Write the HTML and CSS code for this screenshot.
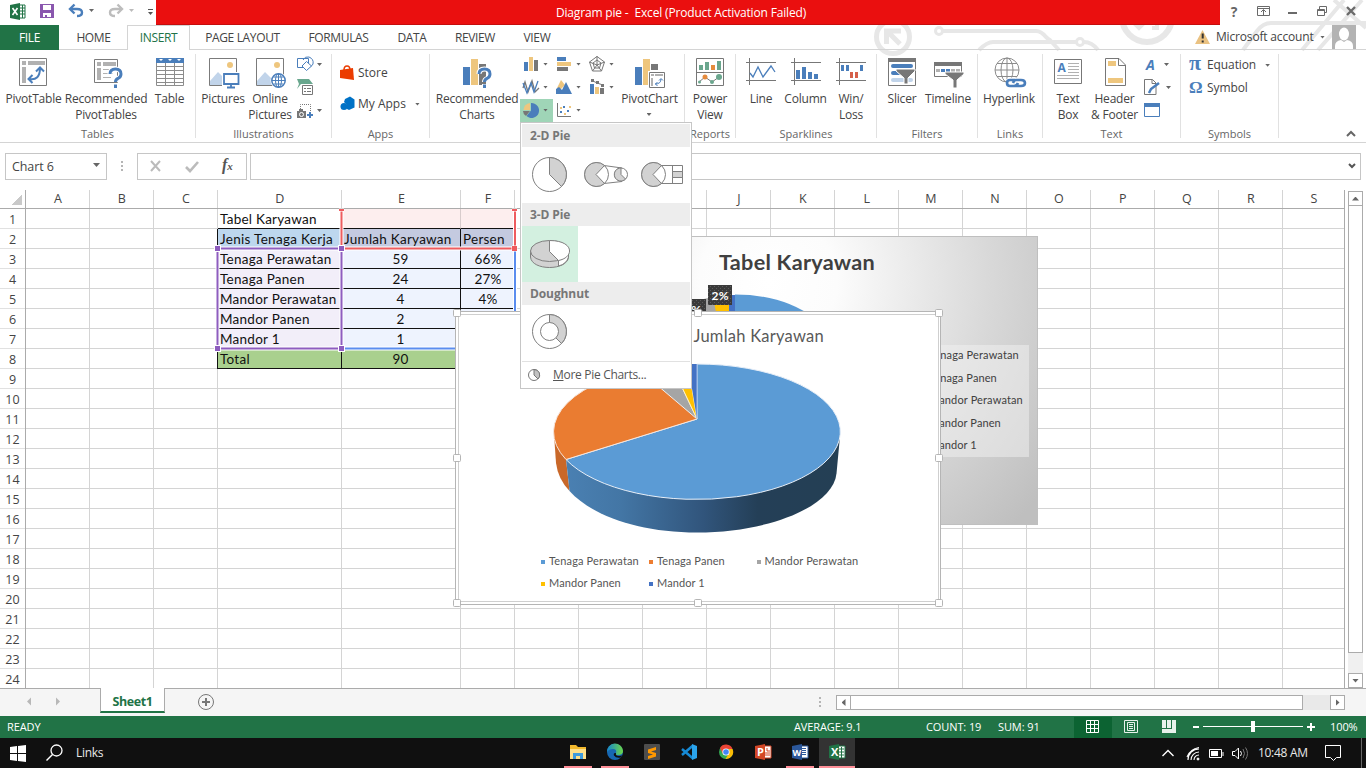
FILE: index.html
```html
<!DOCTYPE html>
<html lang="en">
<head>
<meta charset="utf-8">
<title>Diagram pie - Excel</title>
<link rel="stylesheet" href="styles.css">
</head>
<body>
<div class="app">
  <svg class="circuit" width="500" height="50" viewBox="866 0 500 50" fill="none" stroke="#e7e7e7" stroke-width="4">
    <circle cx="893" cy="37" r="16.5" stroke-width="5"/>
    <path d="M900 44 887 31M886.500 44V31H901" stroke-width="5"/>
    <circle cx="939" cy="31" r="3.5" stroke-width="3"/><path d="M943 31h93q5 0 10 6l7 6M979 50q8-8 14-8h83M1084 42q8 0 14 8M1049 39l10 11"/>
    <circle cx="1080" cy="42" r="3.5" stroke-width="3"/>
    <circle cx="1147" cy="17" r="25" stroke-width="6"/><path d="M1134 23l5 5 8-8M1157 24v4h-5"/>
    <path d="M1243 50l14-19q6-8 14-8h95M1302 50l42-50M1318 50l44-50M1334 0l32 28"/>
  </svg>

  <header class="titlebar">
    <div class="quick">
      <svg width="156" height="25" viewBox="0 0 156 25" fill="none">
        <path d="M19 5h6v13h-6z" fill="#fff" stroke="#217346"/><path d="M20 8h5M20 11h5M20 14h5M22.500 5v13" stroke="#217346"/><path d="M10 5l10-2v17l-10-2z" fill="#217346"/><path d="M12.500 8l5 7M17.500 8l-5 7" stroke="#fff" stroke-width="1.600"/>
        <path d="M40 4h14v14H40z" fill="#8a57ae"/><path d="M43 5h8v5h-8zM43 13h8v4h-8z" fill="#fff"/><path d="M45 15h2v2h-2z" fill="#8a57ae"/>
        <path d="M71 9h6q5 0 5 3.500t-5 3.500" stroke="#4a7ebb" stroke-width="2.400"/><path d="M74.500 4.500L70 9l4.500 4.500" stroke="#4a7ebb" stroke-width="2.400"/>
        <path d="M121 9h-6q-5 0-5 3.500t5 3.500" stroke="#bdbdbd" stroke-width="2.400"/><path d="M117.500 4.500L122 9l-4.500 4.500" stroke="#bdbdbd" stroke-width="2.400"/>
        <path d="M89 9h5l-2.500 3z" fill="#666"/><path d="M129 9h5l-2.500 3z" fill="#bbb"/><path d="M148 9.500h5" stroke="#555"/><path d="M148 12h5l-2.500 3z" fill="#555"/>
      </svg>
    </div>
    <div class="caption"><span>Diagram pie -&nbsp; Excel (Product Activation Failed)</span></div>
    <div class="window-controls">
      <b class="help">?</b>
      <svg width="118" height="25" viewBox="1248 0 118 25" fill="none" stroke="#6a6a6a">
        <path d="M1257.500 6.500h12v9h-12zM1257.500 8.500h12M1263.500 15v-5M1261 12l2.500-2.500 2.500 2.500"/>
        <path d="M1288 13h9" stroke-width="2"/><path d="M1319.500 6.500h7v6h-7z"/><path d="M1317.500 9.500h7v6h-7z" fill="#fff"/><path d="M1317.500 10.500h7"/>
        <path d="M1347 7l8 8M1355 7l-8 8" stroke-width="2.400"/>
      </svg>
    </div>
  </header>

  <nav class="tabs">
    <span class="tab tab-file">FILE</span><span class="tab tab-home">HOME</span><span class="tab tab-insert">INSERT</span><span class="tab tab-page">PAGE LAYOUT</span><span class="tab tab-formulas">FORMULAS</span><span class="tab tab-data">DATA</span><span class="tab tab-review">REVIEW</span><span class="tab tab-view">VIEW</span>
    <div class="account">
      <svg width="16" height="14" viewBox="0 0 16 14"><path d="M7.500 0L15 14H0z" fill="#eac282"/><path d="M7.700 3.500v5M7.700 10.500v2" stroke="#333" stroke-width="2"/></svg>
      <span class="account-name">Microsoft account</span><i class="caret"></i>
      <svg class="avatar" width="24" height="24" viewBox="0 0 24 24"><path d="M0 0h24v24H0z" fill="#b3b3b3"/><ellipse cx="12" cy="9" rx="5" ry="6.500" fill="#fff"/><path d="M3 24v-3q0-5 6-6l3 2 3-2q6 1 6 6v3z" fill="#fff"/></svg>
    </div>
  </nav>

  <section class="ribbon">
    <div class="group g-tables">
      <div class="tools">
        <div class="big b66"><svg width="32" height="32" fill="none"><path d="M2.500 2.500h27v27h-27z" fill="#fff" stroke="#7b7b7b"/><path d="M5 5h4v4H5zM11 5h17v4H11zM5 11h4v16H5z" fill="#b1b1b1"/><path d="M12 23q11 2 11-11M19 15.500l4-4 4 4M15.500 19l-4 4 4 4" stroke="#4a7ebb" stroke-width="2"/></svg><span>PivotTable</span></div>
        <div class="big b79"><svg width="32" height="32" fill="none"><path d="M4.500 3.500h23v23h-23z" fill="#fff" stroke="#7b7b7b"/><path d="M7 6h4v4H7zM13 6h13v4H13zM7 12h4v12H7z" fill="#b1b1b1"/><path d="M13 13.500h12M13 17.500h10M13 21.500h8" stroke="#b1b1b1"/><path d="M20 18q0-5 5.500-5t5.500 5q0 3-3 4.500-2.500 1-2.500 3.500M25.500 28v4" stroke="#fff" stroke-width="5"/><path d="M20 18q0-5 5.500-5t5.500 5q0 3-3 4.500-2.500 1-2.500 3.500M25.500 28.500v3.500" stroke="#4a7ebb" stroke-width="3"/></svg><span>Recommended<br>PivotTables</span></div>
        <div class="big b49"><svg width="32" height="32" fill="none"><path d="M2.500 3v26.500h27V3zM2.500 10.500h27M2.500 14.500h27M2.500 18.500h27M2.500 22.500h27M2.500 26.500h27M11.500 7v22M20.500 7v22" stroke="#8c8c8c"/><path d="M2 2h28v5H2z" fill="#4a7ebb"/><path d="M5 3h4l-2 2zM14 3h4l-2 2zM23 3h4l-2 2z" fill="#fff"/></svg><span>Table</span></div>
      </div><div class="group-name">Tables</div>
    </div>
    <div class="group g-illus">
      <div class="tools">
        <div class="big b46"><svg width="32" height="32" fill="none"><path d="M2.500 2.500h27v27h-27z" fill="#fff" stroke="#7b7b7b"/><circle cx="23" cy="9" r="3" fill="#eec67e"/><path d="M3 29V25l8-9 7 7v6z" fill="#c1d4ea"/><path d="M15 16h18v14H15z" fill="#fff"/><path d="M17 18h14.500v10H17zM24 28v3M20 31.500h8" stroke="#4a7ebb" stroke-width="1.800"/></svg><span>Pictures</span></div>
        <div class="big b48"><svg width="32" height="32" fill="none"><path d="M2.500 2.500h27v27h-27z" fill="#fff" stroke="#7b7b7b"/><circle cx="23" cy="9" r="3" fill="#eec67e"/><path d="M3 29V25l8-9 7 7v6z" fill="#c1d4ea"/><circle cx="24.500" cy="24.500" r="8" fill="#fff"/><circle cx="24.500" cy="24.500" r="6.700" stroke="#4a7ebb" stroke-width="1.500"/><ellipse cx="24.500" cy="24.500" rx="3" ry="6.700" stroke="#4a7ebb"/><path d="M24.500 18v13M18 24.500h13M19.500 21h10M19.500 28h10" stroke="#4a7ebb"/></svg><span>Online<br>Pictures</span></div>
        <svg class="minis" width="32" height="70" viewBox="295 53 32 70" fill="none"><path d="M297.500 58.500h11v9h-11z" stroke="#4a7ebb"/><path d="M303 60q2-4 6-3 5 2 4 7-1 2-3 3" stroke="#4a7ebb"/><path d="M306.500 61.500l5 4.500-5 4.500-4.500-4.500z" stroke="#4a7ebb" fill="#fff"/><path d="M297 79h12l4 5H301l-4 5 2-5z" fill="#69a78e"/><path d="M302.500 85.500h10v9h-10z" fill="#fff" stroke="#777"/><path d="M304 88.500h2M307 88.500h4M304 91.500h2M307 91.500h4" stroke="#777"/><path d="M300.500 111v-6.500h10v10" stroke="#777" stroke-dasharray="1 1"/><path d="M297 111h9v7h-9zM299 109h4v2h-4z" fill="#777"/><circle cx="301.500" cy="114.500" r="2" stroke="#fff"/><path d="M307 115h6M310 112v6" stroke="#4a7ebb" stroke-width="2"/><path d="M317 63h5l-2.500 3zM317 109h5l-2.500 3z" fill="#666"/></svg>
      </div><div class="group-name">Illustrations</div>
    </div>
    <div class="group g-apps">
      <div class="tools app-list">
        <div class="app-row"><svg width="16" height="16" fill="none"><path d="M4 5q0-4 3-4t3 4" stroke="#eb3c00" stroke-width="1.500"/><path d="M0 5l13-2 1 12-14-2z" fill="#eb3c00"/></svg><span>Store</span></div>
        <div class="app-row"><svg width="16" height="16"><path d="M5 3l5-2.500 4.500 3v8L9 14l-2-1V9L4 6z" fill="#0072c6"/><circle cx="4" cy="10.500" r="3.500" fill="#0072c6"/></svg><span>My Apps</span><i class="caret"></i></div>
      </div><div class="group-name">Apps</div>
    </div>
    <div class="group g-charts">
      <div class="tools">
        <div class="big b88"><svg width="32" height="32" fill="none"><path d="M3 11h7v18H3z" fill="#4a7ebb"/><path d="M11 3h7v26h-7z" fill="#eec67e"/><path d="M19 8h7v21h-7z" fill="#777"/><path d="M19 18q0-5 5.500-5t5.500 5q0 3-3 4.500-2.500 1-2.500 3.500M24.500 28v4" stroke="#fff" stroke-width="5"/><path d="M19 18q0-5 5.500-5t5.500 5q0 3-3 4.500-2.500 1-2.500 3.500M24.500 28.500v3.500" stroke="#4a7ebb" stroke-width="3"/></svg><span>Recommended<br>Charts</span></div>
        <div class="chart-types">
          <div><svg width="16" height="16"><path d="M1 6h4v9H1z" fill="#4a7ebb"/><path d="M6 1h4v14H6z" fill="#eec67e"/><path d="M11 4h4v11h-4z" fill="#777"/></svg><i class="caret"></i></div>
          <div><svg width="16" height="16"><path d="M1 1h9v4H1z" fill="#4a7ebb"/><path d="M1 6h14v4H1z" fill="#eec67e"/><path d="M1 11h11v4H1z" fill="#777"/></svg><i class="caret"></i></div>
          <div><svg width="16" height="16" fill="none" stroke="#777"><path d="M8 .5L15.500 6l-3 9h-9L.5 6zM8 4l4 3-1.500 5h-5L4 7zM8 0v9M.5 6L8 9M15.500 6L8 9M3.500 15L8 9l4.500 6"/></svg><i class="caret"></i></div>
          <div><svg width="16" height="16" fill="none"><path d="M0 9l2-6 3 10L9 2l3 11 4-4" stroke="#777" stroke-width="1.300"/><path d="M0 4l4 10L8 4l3 9 4-11" stroke="#4a7ebb" stroke-width="1.300"/></svg><i class="caret"></i></div>
          <div><svg width="16" height="16"><path d="M1 9l4-8 4 5-6 6z" fill="#eec67e"/><path d="M0 15V10l3-2 3 3 4-8 6 12z" fill="#4a7ebb"/></svg><i class="caret"></i></div>
          <div><svg width="16" height="16" fill="none"><path d="M1 5h4v10H1z" fill="#4a7ebb"/><path d="M6 8h4v7H6z" fill="#eec67e"/><path d="M11 9h4v6h-4z" fill="#777"/><path d="M2 1l6 3 6 2" stroke="#777"/><path d="M2 0h3v3H2zM7 2h3v3H7zM12 5h3v3h-3z" fill="#777"/></svg><i class="caret"></i></div>
          <div class="pressed"><svg width="16" height="16"><path d="M8 1v7.500L3.500 14A7.500 7.500 0 1 0 8 1z" fill="#4a7ebb"/><path d="M7 8H.500A7 7 0 0 1 7 1z" fill="#eec67e"/><path d="M0 9h7l-4 5Q0 12 0 9z" fill="#777"/></svg><i class="caret"></i></div>
          <div><svg width="16" height="16"><path d="M1.500 1v13.500H15" fill="none" stroke="#777"/><path d="M4 9h2v2H4zM7 4h2v2H7zM11 8h2v2h-2z" fill="#4a7ebb"/><path d="M4 5h2v2H4zM8 11h2v2H8zM13 4h2v2h-2z" fill="#eec67e"/></svg><i class="caret"></i></div>
        </div>
        <div class="big b60"><svg width="32" height="32" fill="none"><path d="M2 11h7v18H2z" fill="#4a7ebb"/><path d="M10 3h7v26h-7z" fill="#eec67e"/><path d="M18 8h7v6h-7z" fill="#777"/><path d="M15 15h17v17H15z" fill="#fff"/><path d="M16.500 16.500h15v15h-15z" stroke="#777"/><path d="M18 18h3v2h-3zM22 18h8v2h-8zM18 22h2v8h-2z" fill="#b1b1b1"/><path d="M22 28q6 0 6-5M26 24.500l2-2 2 2M24.500 26l-2 2 2 2" stroke="#4a7ebb"/></svg><span>PivotChart</span><i class="caret"></i></div>
      </div><div class="group-name charts-name">Charts</div>
    </div>
    <div class="group g-reports">
      <div class="tools"><div class="big b50"><svg width="32" height="32" fill="none"><path d="M2.500 2.500h27v27h-27zM2 16.500h28" stroke="#777"/><path d="M5 9h4v5H5zM11 6h4v8h-4zM23 5h4v9h-4z" fill="#6aa68d"/><path d="M17 9h4v5h-4z" fill="#e58b3d"/><path d="M5 26l6-5 7 5 7-5" stroke="#777"/><circle cx="11" cy="21" r="2.500" fill="#e58b3d"/><circle cx="25" cy="21" r="3" fill="#6aa68d"/><circle cx="5.500" cy="26" r="1.500" fill="#6aa68d"/><circle cx="18" cy="26" r="2" fill="#6aa68d"/></svg><span>Power<br>View</span></div></div><div class="group-name">Reports</div>
    </div>
    <div class="group g-spark">
      <div class="tools">
        <div class="big b44"><svg width="32" height="32" fill="none"><path d="M1 6.500h30M1 24.500h30M4.500 2v27" stroke="#777"/><path d="M5 17l3 4 5-10 5 10 8-11 4 6" stroke="#4a7ebb" stroke-width="1.300"/></svg><span>Line</span></div>
        <div class="big b45"><svg width="32" height="32" fill="none"><path d="M1 6.500h30M1 24.500h30M4.500 2v27" stroke="#777"/><path d="M6 14h4v9H6zM12 11h4v12h-4zM18 16h4v7h-4zM24 18h4v5h-4z" fill="#4a7ebb"/></svg><span>Column</span></div>
        <div class="big b46"><svg width="32" height="32" fill="none"><path d="M1 6.500h30M1 24.500h30M4.500 2v27" stroke="#777"/><path d="M6 9h3v6H6zM11 9h3v6h-3zM25 9h3v6h-3z" fill="#4a7ebb"/><path d="M15 16h3v6h-3zM20 16h3v6h-3z" fill="#d6604a"/></svg><span>Win/<br>Loss</span></div>
      </div><div class="group-name">Sparklines</div>
    </div>
    <div class="group g-filters">
      <div class="tools">
        <div class="big b44"><svg width="32" height="32" fill="none"><path d="M2.500 2.500h27v27h-27z" fill="#fff" stroke="#777"/><path d="M2 2h28v4H2z" fill="#777"/><path d="M7 10h18M7 17h8" stroke="#4a7ebb" stroke-width="4" stroke-linecap="round"/><path d="M7 24h18" stroke="#c1d4ea" stroke-width="4" stroke-linecap="round"/><path d="M10 13h19v2l-7 7v6h-4v-6l-8-7z" fill="#777" stroke="#fff"/></svg><span>Slicer</span></div>
        <div class="big b48"><svg width="32" height="32" fill="none"><path d="M2.500 6.500h27v14h-27z" fill="#fff" stroke="#777"/><path d="M2 6h28v4H2z" fill="#777"/><path d="M4 14.500h4M19 14.500h4M24 14.500h4" stroke="#b1b1b1" stroke-width="3"/><path d="M9 14.500h4M14 14.500h4" stroke="#4a7ebb" stroke-width="3"/><path d="M13 16h19v2l-7 6v8h-4v-8l-8-6z" fill="#777" stroke="#fff"/></svg><span>Timeline</span></div>
      </div><div class="group-name">Filters</div>
    </div>
    <div class="group g-links">
      <div class="tools"><div class="big b62"><svg width="34" height="32" fill="none"><circle cx="15" cy="14" r="12" stroke="#8c8c8c"/><ellipse cx="15" cy="14" rx="6" ry="12" stroke="#8c8c8c"/><path d="M15 2v24M3 14h24M5 7.500h20M5 20.500h20" stroke="#8c8c8c"/><path d="M17 21.500h15v10H14v-8z" fill="#fff"/><path d="M23 24h-5q-3 0-3 3t3 3h4q3 0 4-3M23 30h6q4 0 4-3t-4-3h-5q-2 0-3 3" stroke="#4a7ebb" stroke-width="2.600"/></svg><span>Hyperlink</span></div></div><div class="group-name">Links</div>
    </div>
    <div class="group g-text">
      <div class="tools">
        <div class="big b42"><svg width="32" height="32" fill="none"><path d="M2.500 3.500h27v24h-27z" fill="#fff" stroke="#777"/><path d="M16 7.500h11M16 10.500h11M16 13.500h11M16 16.500h11M5 19.500h22M5 22.500h22" stroke="#b1b1b1"/><text x="5.500" y="16" class="glyph-a">A</text></svg><span>Text<br>Box</span></div>
        <div class="big b51"><svg width="32" height="32" fill="none"><path d="M6.500 2.500H20l6.500 6.500v20.500h-20zM19.500 2.500V9.500h7" fill="#fff" stroke="#777"/><path d="M9 5h8v5H9zM9 22h15v5H9z" fill="#eec67e"/></svg><span>Header<br>&amp; Footer</span></div>
        <svg class="minis" width="32" height="70" viewBox="1142 53 32 70" fill="none"><text x="1146" y="70" class="wordart">A</text><path d="M1144.500 79.500h8l3.500 3.500v11.500h-11.500zM1152 79.500v4h4" fill="#fff" stroke="#777"/><path d="M1149 93l2-4 8-6" stroke="#4a7ebb" stroke-width="2.500"/><path d="M1144.500 104.500h15v12h-15z" stroke="#4a7ebb"/><path d="M1144 103h16v4h-16z" fill="#4a7ebb"/><path d="M1164 63h5l-2.500 3zM1166 86h5l-2.500 3z" fill="#666"/></svg>
      </div><div class="group-name">Text</div>
    </div>
    <div class="group g-symbols">
      <div class="tools symbol-list"><div><b class="pi">π</b><span>Equation</span><i class="caret"></i></div><div><b>Ω</b><span>Symbol</span></div></div><div class="group-name">Symbols</div>
    </div>
    <svg class="collapse" width="10" height="8" fill="none"><path d="M1 6l4-4 4 4" stroke="#666" stroke-width="2"/></svg>
  </section>

  <section class="formula-bar">
    <div class="name-box"><span>Chart 6</span><i class="caret big-caret"></i></div>
    <div class="dots"></div>
    <div class="fx-box"><svg width="108" height="25" viewBox="138 154 108 25" fill="none"><path d="M151 161l9 10M160 161l-9 10" stroke="#bbb" stroke-width="2"/><path d="M186 167l4 4 8-9" stroke="#bbb" stroke-width="2.600"/></svg><i class="fx">f<small>x</small></i></div>
    <div class="formula"><svg width="8" height="6" fill="none"><path d="M1 1l3 3 3-3" stroke="#555" stroke-width="2"/></svg></div>
  </section>

  <main class="sheet">
    <div class="rows"><div class="corner"></div>
      <b>1</b><b>2</b><b>3</b><b>4</b><b>5</b><b>6</b><b>7</b><b>8</b><b>9</b><b>10</b><b>11</b><b>12</b><b>13</b><b>14</b><b>15</b><b>16</b><b>17</b><b>18</b><b>19</b><b>20</b><b>21</b><b>22</b><b>23</b><b>24</b></div>
    <div class="col"><b>A</b></div><div class="col"><b>B</b></div><div class="col"><b>C</b></div>
    <div class="col col-d"><b>D</b><p class="ul">Tabel Karyawan</p><p class="head">Jenis Tenaga Kerja</p><p>Tenaga Perawatan</p><p>Tenaga Panen</p><p>Mandor Perawatan</p><p>Mandor Panen</p><p>Mandor 1</p><p class="total">Total</p></div>
    <div class="col col-e"><b>E</b><p class="pink"></p><p class="head2">Jumlah Karyawan</p><p>59</p><p>24</p><p>4</p><p>2</p><p>1</p><p class="total">90</p></div>
    <div class="col col-f"><b>F</b><p class="pink"></p><p class="head2">Persen</p><p>66%</p><p>27%</p><p>4%</p><p>2%</p><p>1%</p><p class="total"></p></div>
    <div class="col"><b>G</b></div><div class="col"><b>H</b></div><div class="col"><b>I</b></div><div class="col"><b>J</b></div><div class="col"><b>K</b></div><div class="col"><b>L</b></div><div class="col"><b>M</b></div><div class="col"><b>N</b></div><div class="col"><b>O</b></div><div class="col"><b>P</b></div><div class="col"><b>Q</b></div><div class="col"><b>R</b></div><div class="col col-s"><b>S</b></div>
    <div class="vscroll"><div class="arrow"><i class="up"></i></div><div class="vthumb"></div><div class="vtrack"></div><div class="arrow"><i class="down"></i></div></div>

    <svg class="ranges" width="310" height="150" viewBox="212 205 310 150" fill="none">
      <path d="M515 250v98.500H342" stroke="#fff" stroke-width="4"/><path d="M515 250v98.500H342" stroke="#5b8def" stroke-width="2"/>
      <path d="M341.500 209v39.500H515V209" stroke="#fff" stroke-width="4"/><path d="M341.500 209v39.500H515V209" stroke="#ee5c5f" stroke-width="2"/>
      <path d="M217.500 248.500h124v100h-124z" stroke="#fff" stroke-width="4"/><path d="M217.500 248.500h124v100h-124z" stroke="#8e5dbf" stroke-width="2"/>
      <path d="M339 209h5v2h-5zM512 209h5v2h-5zM512 246h5v5h-5z" fill="#ee5c5f" stroke="#fff" paint-order="stroke"/>
      <path d="M215 246h5v5h-5zM339 246h5v5h-5zM215 346h5v5h-5zM339 346h5v5h-5z" fill="#8e5dbf" stroke="#fff" stroke-width="2" paint-order="stroke"/>
    </svg>

    <div class="back-chart"><svg width="479" height="287" viewBox="558 237 479 287">
      <defs><pattern id="dots" width="4" height="4" patternUnits="userSpaceOnUse"><path d="M0 0h4v4H0z" fill="#3a3a3a"/><path d="M0 0h1v1H0zM2 2h1v1H2z" fill="#5c5c5c"/></pattern></defs>
      <text x="719" y="270" textLength="156" lengthAdjust="spacingAndGlyphs" class="back-title">Tabel Karyawan</text>
      <path d="M735 330V294.500q48 0 80 24z" fill="#5b9bd5"/><path d="M729 295h6v20h-6z" fill="#4472c4"/><path d="M713 298l16-3v20h-14z" fill="#ffc000"/><path d="M680 304l33-7 4 20h-37z" fill="#a5a5a5"/>
      <path d="M682 299h24v20h-24zM708 285h24v20h-24z" fill="url(#dots)"/><text x="684" y="314" class="pct">4%</text><text x="711.500" y="300" class="pct">2%</text>
      <path d="M900 345h129v112H900z" fill="#f2f2f2" opacity=".5"/>
      <g class="legend dark"><text x="929" y="359" textLength="90">Tenaga Perawatan</text><text x="929" y="382" textLength="68">Tenaga Panen</text><text x="929" y="404" textLength="94">Mandor Perawatan</text><text x="929" y="427" textLength="72">Mandor Panen</text><text x="929" y="449" textLength="48">Mandor 1</text></g>
    </svg></div>

    <svg class="front-chart" width="494" height="300" viewBox="452 308 494 300">
      <defs><linearGradient id="side"><stop offset="0" stop-color="#4a80b2"/><stop offset=".2" stop-color="#4376a5"/><stop offset=".5" stop-color="#31557c"/><stop offset=".7" stop-color="#243f57"/><stop offset="1" stop-color="#243f54"/></linearGradient></defs>
      <path d="M455.500 311.500h485v293h-485z" fill="#fff" stroke="#b5b5b5"/><path d="M458.500 314.500h480v287h-480z" fill="none" stroke="#cfcfcf"/>
      <text x="572" y="342" textLength="252" lengthAdjust="spacingAndGlyphs" class="front-title">Tabel Karyawan Jumlah Karyawan</text>
      <path d="M554 434L556 463q2 16 13.500 28L566 459z" fill="#c96829"/>
      <path d="M566 459l3.500 32C592 516 640 532.500 697 532.500c72 0 136-26 139.500-59L840 436z" fill="url(#side)"/>
      <path d="M697 419V364A143.500 67.700 0 1 1 566 459.500z" fill="#5b9bd5" stroke="#e8eff8"/>
      <path d="M697 419L566 459.500A143.500 67.700 0 0 1 660 366.500z" fill="#ea7c31" stroke="#f7e6dc"/>
      <path d="M697 419L637 368 671 364z" fill="#a5a5a5" stroke="#eee"/><path d="M697 419L671 364h17z" fill="#ffc000" stroke="#fff0c0"/><path d="M697 419L688 364h9z" fill="#4472c4"/><path d="M697 364v55" stroke="#9ab9e6"/>
      <g fill="#5b9bd5"><path d="M541 560h4v4h-4z"/><path d="M649 560h4v4h-4z" fill="#ed7d31"/><path d="M757 560h4v4h-4z" fill="#a5a5a5"/><path d="M541 582h4v4h-4z" fill="#ffc000"/><path d="M649 582h4v4h-4z" fill="#4472c4"/></g>
      <g class="legend"><text x="549" y="565" textLength="90">Tenaga Perawatan</text><text x="657" y="565" textLength="68">Tenaga Panen</text><text x="764.500" y="565" textLength="94">Mandor Perawatan</text><text x="549" y="587" textLength="72">Mandor Panen</text><text x="657" y="587" textLength="48">Mandor 1</text></g>
      <g fill="#fff" stroke="#b5b5b5"><rect x="453.500" y="309.500" width="7" height="7" rx="1"/><rect x="694.500" y="309.500" width="7" height="7" rx="1"/><rect x="935.500" y="309.500" width="7" height="7" rx="1"/><rect x="453.500" y="454.500" width="7" height="7" rx="1"/><rect x="935.500" y="454.500" width="7" height="7" rx="1"/><rect x="453.500" y="599.500" width="7" height="7" rx="1"/><rect x="694.500" y="599.500" width="7" height="7" rx="1"/><rect x="935.500" y="599.500" width="7" height="7" rx="1"/></g>
    </svg>
  </main>

  <section class="sheet-tabs">
    <svg class="tab-nav" width="100" height="28"><path d="M31 9.500v8l-4-4zM56 9.500v8l4-4z" fill="#b8b8b8"/></svg>
    <div class="sheet-tab">Sheet1</div>
    <svg class="add" width="17" height="17" fill="none" stroke="#777"><circle cx="8" cy="9" r="7.500"/><path d="M4 9h8M8 5v8" stroke-width="2"/></svg>
    <div class="dots hdots"></div>
    <div class="hscroll"><div class="arrow"><i class="left"></i></div><div class="hthumb"></div><div class="htrack"></div><div class="arrow"><i class="right"></i></div></div>
  </section>

  <footer class="status">
    <span class="s-ready">READY</span><span class="s-avg">AVERAGE: 9.1</span><span class="s-count">COUNT: 19</span><span class="s-sum">SUM: 91</span>
    <svg class="views" width="256" height="22" viewBox="1074 716 256 22" fill="none"><path d="M1074 717h38v21h-38z" fill="#0c6332"/><path d="M1086.500 720.500h12v12h-12zM1086 724.500h13M1086 728.500h13M1090.500 720v13M1094.500 720v13" stroke="#fff"/><path d="M1124.500 720.500h13v12h-13zM1127.500 722.500h7v8h-7zM1129 724.500h4M1129 726.500h4M1129 728.500h4" stroke="#e8f2ec"/><path d="M1162 720h4v8h-4zM1167 720h4v8h-4zM1172 720h4v13h-14v-4h10z" fill="#e8f2ec"/><path d="M1193 727h6M1307 727h8M1311 723v8" stroke="#fff" stroke-width="2"/><path d="M1203 726.500h100" stroke="#fff"/><path d="M1251 721h4v11h-4z" fill="#fff"/></svg>
    <span class="zoom">100%</span>
  </footer>

  <footer class="taskbar">
    <svg width="76" height="30" viewBox="0 738 76 30" fill="none"><path d="M10 747l7-1v7h-7zM18 746l8-1v8h-8zM10 754h7v7l-7-1zM18 754h8v8l-8-1z" fill="#fff"/><circle cx="56.500" cy="750.500" r="5.500" stroke="#fff" stroke-width="1.300"/><path d="M52.500 754.500l-6 6" stroke="#fff" stroke-width="1.400"/></svg>
    <span class="links">Links</span>
    <div class="pins">
      <div class="on"><svg width="18" height="18"><path d="M1 2h6l2 2h8v12H1z" fill="#f2b92d"/><path d="M1 6h16v10H1z" fill="#ffe08a"/><path d="M4 10h10v6h-3v-3H7v3H4z" fill="#3f9bdc"/></svg></div>
      <div class="on"><svg width="18" height="18"><defs><linearGradient id="edge" x2="1"><stop stop-color="#1687cf"/><stop offset="1" stop-color="#6cd747"/></linearGradient></defs><circle cx="9" cy="9" r="8" fill="#1768b3"/><path d="M1 9A8 8 0 0 1 17 8q0 4-5 4-3 0-2-2 1-4-3-4-4 0-6 3z" fill="url(#edge)"/><path d="M10 10q-1 3 3 3l3-.5-1 2q-5 1-7-2-1-3 2-2.500z" fill="#101010"/></svg></div>
      <div><svg width="18" height="18"><rect x="1" y="1" width="16" height="16" rx="1" fill="#4d4d4d"/><path d="M13 4v3L8 8.500l5 1.500v3.500L5 16v-3l5-1.500L5 10V6.500z" fill="#ff9800"/></svg></div>
      <div><svg width="18" height="18" fill="none"><path d="M13 2.500L2 12M13 15.500L2 6" stroke="#168ad5" stroke-width="2.500"/><path d="M12 1l5 2v12l-5 2z" fill="#2ba4ec"/></svg></div>
      <div><svg width="18" height="18"><circle cx="9" cy="9" r="7" fill="#34a853"/><path d="M3 5A7 7 0 0 1 15.500 6H9L6 11z" fill="#ea4335"/><path d="M15.500 6a7 7 0 0 1-7 10L12 10V6z" fill="#fbbc05"/><circle cx="9" cy="9" r="3.600" fill="#fff"/><circle cx="9" cy="9" r="2.800" fill="#4285f4"/></svg></div>
      <div><svg width="18" height="18"><path d="M9 3h8v12H9z" fill="#fff" stroke="#d24726"/><path d="M11 10h5M11 12h5M13 5v3h3" stroke="#d24726" fill="none"/><path d="M1 3l10-2v16L1 15z" fill="#d24726"/><text x="3" y="13" class="app-letter">P</text></svg></div>
      <div class="on"><svg width="18" height="18"><path d="M9 3h8v12H9z" fill="#fff" stroke="#2b579a"/><path d="M11 5.500h4M11 7.500h4M11 9.500h4M11 11.500h4" stroke="#2b579a"/><path d="M1 3l10-2v16L1 15z" fill="#2b579a"/><text x="1.500" y="12.500" class="app-letter w">W</text></svg></div>
      <div class="on current"><svg width="18" height="18"><path d="M9 3h8v12H9z" fill="#fff" stroke="#217346"/><path d="M11 6h5M11 9h5M11 12h5M13.500 4v11" stroke="#217346"/><path d="M1 3l10-2v16L1 15z" fill="#217346"/><text x="3" y="13" class="app-letter">X</text></svg></div>
    </div>
    <svg class="tray" width="110" height="30" viewBox="1148 738 110 30" fill="none" stroke="#fff"><path d="M1162.500 756l5.500-5.500 5.500 5.500" stroke-width="1.400"/><path d="M1188 760a11 11 0 0 1 11-11M1191 760a8 8 0 0 1 8-8M1194 760a5 5 0 0 1 5-5M1187 757q3-8 12-9.500" stroke-width="1.100"/><circle cx="1198" cy="759" r="1" fill="#fff"/><path d="M1209.500 749.500h12v8h-12zM1223 752v4"/><path d="M1211 751h7v5h-7z" fill="#fff" stroke="none"/><path d="M1232.500 751.500h2.500l3.500-3.500v11l-3.500-3.500h-2.500zM1240.500 751q2 2.500 0 5"/><path d="M1243 749q3 4.500 0 9M1245.500 747.500q4 6 0 12" stroke="#777"/></svg>
    <span class="clock">10:48 AM</span>
    <svg class="notice" width="59" height="30" viewBox="1307 738 59 30" fill="none"><path d="M1325.500 745.500h15v12h-4l-3 3-3-3h-5z" stroke="#fff"/><path d="M1361.500 738v30" stroke="#666"/></svg>
  </footer>

  <div class="menu">
    <h4>2-D Pie</h4>
    <div class="choices"><svg width="168" height="56" viewBox="522 147 168 56" fill="none" stroke="#808080"><circle cx="549.500" cy="174.500" r="17" fill="#fff"/><path d="M549.500 157.500a17 17 0 0 1 12 29L549.500 174.500z" fill="#d2d2d2"/><circle cx="596.500" cy="174.500" r="12"/><path d="M604.500 165.500a12 12 0 1 0 0 18l-8.500-9z" fill="#d2d2d2"/><path d="M604 165.500l18 2.500M604 183.500l18-2"/><circle cx="621" cy="174.500" r="6.500" fill="#fff"/><path d="M621 168a6.500 6.500 0 1 0 4.500 11l-4.500-4.500z" fill="#d2d2d2"/><circle cx="653.500" cy="174.500" r="12"/><path d="M661.500 165.500a12 12 0 1 0 0 18l-8.500-9z" fill="#d2d2d2"/><path d="M661 165.500h21.500v18H661M672.500 165.500v18"/><path d="M672.500 171.500h10v6h-10z" fill="#d2d2d2"/></svg></div>
    <h4>3-D Pie</h4>
    <div class="choices"><svg class="hot" width="56" height="56" viewBox="522 226 56 56" fill="#fff" stroke="#808080"><path d="M530.500 251v6c1 14 37 14 38 0v-6z" fill="#d2d2d2"/><path d="M558.500 260.500v5.500q8-2 10-9v-6z"/><ellipse cx="549.500" cy="251" rx="19" ry="10.500" fill="#d2d2d2"/><path d="M549.500 240.500c25 0 25 17 9 20l-9-9z"/></svg></div>
    <h4>Doughnut</h4>
    <div class="choices"><svg width="56" height="56" viewBox="522 305 56 56" fill="#fff" stroke="#808080"><circle cx="549.500" cy="331.500" r="17"/><path d="M549.500 314.500a17 17 0 0 1 12 29l-12-12z" fill="#d2d2d2"/><circle cx="549.500" cy="331.500" r="9"/></svg></div>
    <div class="more"><svg width="12" height="12" fill="#fff" stroke="#777"><circle cx="6" cy="6" r="5.500"/><path d="M6 .5a5.500 5.500 0 0 1 4 9.500L6 6z" fill="#c2c2c2"/></svg><span><u>M</u>ore Pie Charts...</span></div>
  </div>
</div>
</body>
</html>
```
FILE: styles.css
```css
* { box-sizing: border-box; }
body { margin: 0; }
.app { position: relative; width: 1366px; height: 768px; overflow: hidden; background: #fff; color: #444; font: 12px/16px "Open Sans", "Noto Sans", sans-serif; letter-spacing: -.1px; display: flex; flex-direction: column; white-space: nowrap; }
.app svg { display: block; flex: none; overflow: visible; }
.circuit { position: absolute; left: 866px; top: 0; }
.caret { width: 5px; height: 3px; background: #666; clip-path: polygon(0 0, 100% 0, 50% 100%); flex: none; }

.titlebar { position: relative; height: 25px; display: flex; flex: none; }
.quick { width: 156px; }
.caption { width: 1064px; background: #ea0f0f; border-bottom: 1px solid #c50d0d; color: #fff; text-align: center; line-height: 26px; padding-right: 14px; letter-spacing: -.17px; }
.window-controls { width: 146px; display: flex; }
.help { width: 28px; text-align: center; color: #666; font-size: 14px; line-height: 23px; }

.tabs { position: relative; height: 25px; display: flex; border-bottom: 1px solid #d4d4d4; flex: none; }
.tab { text-align: center; line-height: 25px; letter-spacing: -.35px; height: 25px; }
.tab-file { width: 59px; background: #217346; color: #fff; }
.tab-home { width: 68px; padding-left: 1px; }
.tab-insert { width: 63px; border: 1px solid #d4d4d4; border-bottom: 0; background: #fff; color: #217346; line-height: 24px; }
.tab-page { width: 104px; padding-left: 1px; }
.tab-formulas { width: 89px; }
.tab-data { width: 58px; }
.tab-review { width: 68px; }
.tab-view { width: 56px; }
.account { margin-left: auto; display: flex; align-items: center; padding-right: 10px; }
.account-name { margin: 0 6px 0 5px; width: 98px; letter-spacing: -.17px; }
.avatar { margin-left: 7px; }

.ribbon { position: relative; height: 93px; display: flex; border-bottom: 1px solid #d4d4d4; flex: none; }
.group { height: 84px; margin-top: 4px; border-right: 1px solid #e1e1e1; flex: none; }
.tools { height: 71px; display: flex; }
.group-name { text-align: center; color: #666; font-size: 11px; line-height: 17px; letter-spacing: 0; }
.g-tables { width: 196px; }
.g-illus { width: 136px; }
.g-illus .tools { padding-left: 4px; }
.g-apps { width: 98px; }
.g-charts { width: 255px; }
.g-charts .tools { padding-left: 2px; }
.g-reports { width: 51px; }
.g-spark { width: 141px; }
.g-spark .tools, .g-filters .tools { padding-left: 3px; }
.g-filters { width: 101px; }
.g-links { width: 65px; }
.g-text { width: 138px; }
.g-text .tools { padding-left: 4px; }
.g-symbols { width: 98px; }
.charts-name { visibility: hidden; }
.big { display: flex; flex-direction: column; align-items: center; text-align: center; padding-top: 2px; flex: none; letter-spacing: -.2px; }
.big span { margin-top: 3px; }
.big .caret { margin-top: 6px; }
.b60 span, .b66 span, .b79 span { padding-left: 1px; }
.b88 span { padding-left: 2px; }
.b42 { width: 42px; } .b44 { width: 44px; } .b45 { width: 45px; } .b46 { width: 46px; } .b48 { width: 48px; } .b49 { width: 49px; } .b50 { width: 50px; } .b51 { width: 51px; } .b60 { width: 60px; } .b62 { width: 62px; } .b66 { width: 66px; } .b79 { width: 79px; } .b88 { width: 88px; }
.minis { margin: -1px 0 0 1px; }
.g-text .minis { margin-left: 2px; }
.app-list { flex-direction: column; padding: 11px 0 0 8px; gap: 15px; }
.app-row { display: flex; gap: 2px; align-items: center; letter-spacing: 0; }
.app-row .caret { margin-left: 7px; }
.chart-types { display: grid; grid-template-columns: repeat(3, 33px); grid-auto-rows: 23px; margin-top: -1px; align-content: start; width: 99px; }
.chart-types div { display: flex; align-items: center; gap: 4px; padding: 0 0 1px 3px; height: 23px; }
.chart-types .pressed { background: #9fd5b7; }
.glyph-a { font: bold 12px "Open Sans", sans-serif; fill: #4a7ebb; }
.wordart { font: italic bold 14px "Open Sans", sans-serif; fill: #4a7ebb; }
.symbol-list { flex-direction: column; padding: 0 0 0 8px; }
.symbol-list div { display: flex; align-items: center; height: 22.500px; }
.symbol-list b { width: 18px; color: #4a7ebb; font: bold 17px/20px "Liberation Serif", serif; }
.symbol-list .pi { font-size: 22px; line-height: 16px; padding-bottom: 5px; }
.symbol-list .caret { margin-left: 9px; }
.collapse { margin: 80px 0 0 67px; }

.formula-bar { height: 47px; padding: 10px 1px 0 5px; display: flex; flex: none; }
.name-box { width: 102px; height: 27px; border: 1px solid #c6c6c6; display: flex; align-items: center; justify-content: space-between; padding: 0 6px 0 6px; font-size: 12.500px; }
.big-caret { width: 7px; height: 4px; margin-top: -3px; }
.dots { width: 2px; height: 11px; margin: 8px 14px 0 14px; background: repeating-linear-gradient(#b5b5b5 0 2px, transparent 2px 4px); }
.fx-box { position: relative; width: 110px; height: 27px; border: 1px solid #c6c6c6; }
.fx { position: absolute; left: 84px; top: 2px; color: #555; font: italic bold 16px/18px "Liberation Serif", serif; }
.fx small { font-size: 11px; }
.formula { width: 1111px; flex: none; margin-left: 3px; height: 27px; border: 1px solid #c6c6c6; display: flex; align-items: center; justify-content: flex-end; padding: 0 4px 2px 0; }

.sheet { position: relative; height: 499px; display: flex; flex: none; border-bottom: 1px solid #ababab; overflow: hidden; font: 13.500px/20px Lato, sans-serif; letter-spacing: .25px; color: #111; }
.sheet b { font: 12.500px/18px "Open Sans", sans-serif; color: #444; display: block; text-align: center; }
.rows { width: 26px; border-right: 1px solid #ababab; flex: none; }
.rows b { height: 20px; line-height: 21px; border-bottom: 1px solid #e1e1e1; letter-spacing: 0; }
.corner { height: 19px; border-bottom: 1px solid #ababab; background: linear-gradient(135deg, transparent 50%, #c9c9c9 50%) 11px 4px / 11px 11px no-repeat; }
.col { width: 64px; flex: none; border-right: 1px solid #d4d4d4; background: repeating-linear-gradient(transparent 0 19px, #d4d4d4 19px 20px) 0 19px no-repeat; }
.col > b { height: 19px; border-bottom: 1px solid #ababab; margin-right: -1px; }
.col-s { width: 62px; border-color: #ababab; }
.col p { margin: 0 -1px 0 0; height: 20px; line-height: 21px; border-bottom: 1px solid #111; border-right: 1px solid #111; padding: 0 1px 0 2px; background: #eef3fe; text-align: center; }
.col-d { width: 124px; }
.col-d p { text-align: left; background: #f2eef9; }
.col-e { width: 119px; }
.col-e p { padding-left: 0; }
.col-f { width: 54px; }
.col .ul { background: none; }
.col .head { background: #bdd7ee; box-shadow: -1px 0 #111; letter-spacing: .3px; }
.col .head2 { background: #c4cae0; text-align: left; padding-left: 2px; }
.col .pink { background: #fdeeee; border-right-color: #d8cccc; }
.col .total { background: #a9d08e; }
.col-d .total { box-shadow: -1px 0 #111; }
.vscroll { margin-left: 3px; width: 15px; padding-top: 1px; display: flex; flex-direction: column; flex: none; }
.arrow { width: 15px; height: 15px; border: 1px solid #ababab; background: #fff; display: flex; align-items: center; justify-content: center; flex: none; }
.arrow i { background: #666; }
.up, .down { width: 7px; height: 4px; }
.up { clip-path: polygon(50% 0, 100% 100%, 0 100%); }
.down { clip-path: polygon(0 0, 100% 0, 50% 100%); }
.left, .right { width: 4px; height: 7px; }
.left { clip-path: polygon(0 50%, 100% 0, 100% 100%); }
.right { clip-path: polygon(0 0, 100% 50%, 0 100%); }
.vthumb { height: 448px; border: 1px solid #ababab; border-top: 0; background: #fff; }
.vtrack { height: 20px; background: #f0f0f0; }
.ranges { position: absolute; left: 212px; top: 15px; }
.back-chart { position: absolute; left: 557px; top: 46px; width: 481px; height: 289px; border: 1px solid #bfbfbf; background: radial-gradient(circle 345px at 210px 45px, #fff 0, #fcfcfc 20%, #d8d8d8 65%, #bfbfbf 100%); }
.back-title { font: bold 21px Lato, sans-serif; fill: #404040; }
.pct { font: bold 12px Lato, sans-serif; fill: #fff; }
.legend { font: 11px Lato, sans-serif; fill: #555; }
.dark { fill: #404040; }
.front-chart { position: absolute; left: 452px; top: 118px; }
.front-title { font: 17px Lato, sans-serif; fill: #595959; }

.sheet-tabs { height: 27px; background: #f5f5f5; display: flex; flex: none; }
.tab-nav { margin-top: -1px; }
.sheet-tab { width: 65px; height: 25px; margin-top: -1px; background: #fff; border: solid #ababab; border-width: 0 1px; border-bottom: 2px solid #217346; color: #217346; font-weight: bold; font-size: 12.500px; line-height: 27px; text-align: center; position: relative; letter-spacing: -.4px; }
.add { margin: 4px 0 0 33px; }
.hdots { margin: 8px 15px 0 604px; }
.hscroll { display: flex; height: 15px; margin-top: 6px; width: 510px; }
.hthumb { width: 453px; margin-left: -1px; border: 1px solid #ababab; background: #fff; }
.htrack { width: 27px; background: #e9e9e9; }

.status { height: 22px; background: #217346; color: #fff; display: flex; flex: none; line-height: 22px; font-size: 11px; letter-spacing: -.1px; }
.s-ready { width: 787px; margin-left: 7px; }
.s-avg { width: 132px; }
.s-count { width: 72px; }
.s-sum { width: 76px; }
.taskbar { height: 30px; background: #101010; color: #e8e8e8; display: flex; flex: none; line-height: 30px; letter-spacing: -.3px; }
.links { width: 483px; }
.pins { display: flex; width: 589px; }
.pins div { width: 28px; margin: 0 4.500px; height: 30px; display: flex; align-items: center; justify-content: center; border-bottom: 2px solid transparent; flex: none; }
.pins .on { border-color: #ff8f98; }
.pins .current { width: 36px; margin: 0 0 0 .5px; background: #333; }
.app-letter { font: bold 11px "Open Sans", sans-serif; fill: #fff; }
.w { font-size: 9px; }
.clock { width: 49px; }

.menu { position: absolute; left: 520px; top: 122px; width: 172px; height: 267px; padding: 1px; border: 1px solid #c6c6c6; background: #fff; }
.menu h4 { margin: 0; height: 23px; background: #ededed; color: #777; font-size: 12px; line-height: 23px; padding-left: 8px; }
.choices { height: 56px; }
.hot { background: #d3f0e0; }
.more { height: 27px; border-top: 1px solid #e1e1e1; display: flex; align-items: center; padding-left: 6px; gap: 13px; letter-spacing: -.3px; color: #555; }
```
